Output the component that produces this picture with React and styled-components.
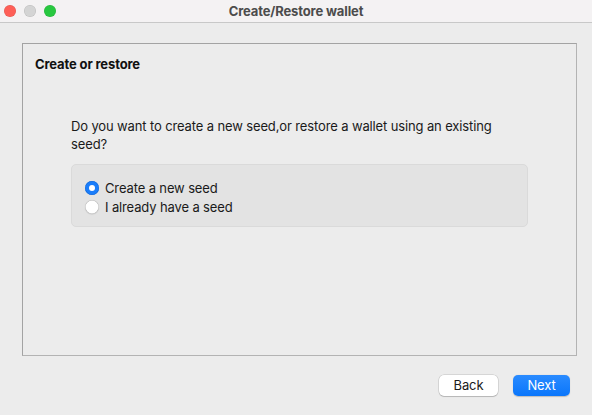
import React, { useState } from 'react';
import styled, { createGlobalStyle } from 'styled-components';

const GlobalStyle = createGlobalStyle`
  html, body {
    margin: 0;
    padding: 0;
    background: #ececec;
  }
  body {
    font-family: Inter, "Liberation Sans", sans-serif;
    letter-spacing: -0.13px;
    -webkit-font-smoothing: antialiased;
  }
  * {
    box-sizing: border-box;
  }
`;

const Window = styled.div`
  width: 592px;
  height: 415px;
  display: flex;
  flex-direction: column;
  background: #ececec;
  overflow: hidden;
`;

const TitleBar = styled.div`
  height: 23px;
  flex-shrink: 0;
  display: grid;
  grid-template-columns: 80px 1fr 80px;
  align-items: center;
  background: #f4f2f3;
  border-bottom: 1px solid #c8c8c8;
`;

const Lights = styled.div`
  display: flex;
  gap: 8px;
  padding-left: 4px;
`;

const Light = styled.span`
  width: 12px;
  height: 12px;
  border-radius: 50%;
  background: ${p => p.$color};
  box-shadow: inset 0 0 0 0.5px rgba(0, 0, 0, 0.12);
`;

const Title = styled.div`
  text-align: center;
  font-size: 13px;
  font-weight: 700;
  color: #4c4c4c;
`;

const Body = styled.div`
  flex: 1;
  display: flex;
  flex-direction: column;
  padding: 20px 15px 0 22px;
`;

const Panel = styled.div`
  height: 313px;
  border: 1px solid #a3a3a3;
  border-bottom-color: #b3b3b3;
  border-right-color: #b3b3b3;
  padding: 12px 0 0 12px;
  display: flex;
  flex-direction: column;
`;

const PanelTitle = styled.div`
  font-size: 13px;
  font-weight: 700;
  color: #111;
  line-height: 16px;
`;

const Content = styled.div`
  margin: 45px 48px 0 36px;
  display: flex;
  flex-direction: column;
`;

const Question = styled.div`
  font-size: 13px;
  line-height: 18px;
  color: #1a1a1a;
  padding-right: 20px;
`;

const Group = styled.div`
  margin-top: 11px;
  height: 63px;
  background: #e3e3e3;
  border: 1px solid #dadada;
  border-radius: 5px;
  padding: 13px 0 0 13px;
  display: flex;
  flex-direction: column;
`;

const Option = styled.label`
  display: flex;
  align-items: center;
  gap: 6px;
  height: 19px;
  font-size: 13px;
  color: #1a1a1a;
  cursor: default;
`;

const Radio = styled.span`
  width: 14px;
  height: 14px;
  border-radius: 50%;
  display: flex;
  align-items: center;
  justify-content: center;
  background: ${p => (p.$checked ? '#1a7dfa' : '#ffffff')};
  box-shadow: ${p =>
    p.$checked ? 'inset 0 0 0 0.5px #1469d8' : 'inset 0 0 0 0.5px #b5b5b5, 0 0.5px 1px rgba(0,0,0,0.15)'};
  &::after {
    content: '';
    width: 6px;
    height: 6px;
    border-radius: 50%;
    background: #fff;
    display: ${p => (p.$checked ? 'block' : 'none')};
  }
`;

const Footer = styled.div`
  display: flex;
  justify-content: flex-end;
  gap: 15px;
  padding: 19px 7px 0 0;
`;

const Button = styled.button`
  height: 21px;
  width: ${p => (p.$primary ? '57px' : '59px')};
  padding: 0;
  border-radius: 5px;
  font-family: inherit;
  letter-spacing: inherit;
  font-size: 13px;
  line-height: 19px;
  border: none;
  color: ${p => (p.$primary ? '#ffffff' : '#1a1a1a')};
  background: ${p => (p.$primary ? 'linear-gradient(#2a8bff, #0a76fb)' : '#ffffff')};
  box-shadow: ${p =>
    p.$primary
      ? '0 0.5px 1px rgba(0,0,0,0.2)'
      : '0 0 0 0.5px rgba(0,0,0,0.18), 0 1px 1px rgba(0,0,0,0.15)'};
`;

const options = ['Create a new seed', 'I already have a seed'];

export default function App() {
  const [choice, setChoice] = useState(0);
  return (
    <Window>
      <GlobalStyle />
      <TitleBar>
        <Lights>
          <Light $color="#fe5f57" />
          <Light $color="#d4d4d4" />
          <Light $color="#28c840" />
        </Lights>
        <Title>Create/Restore wallet</Title>
        <div />
      </TitleBar>
      <Body>
        <Panel>
          <PanelTitle>Create or restore</PanelTitle>
          <Content>
            <Question>
              Do you want to create a new seed,or restore a wallet using an existing seed?
            </Question>
            <Group>
              {options.map((o, i) => (
                <Option key={o} onClick={() => setChoice(i)}>
                  <Radio $checked={choice === i} />
                  {o}
                </Option>
              ))}
            </Group>
          </Content>
        </Panel>
        <Footer>
          <Button>Back</Button>
          <Button $primary>Next</Button>
        </Footer>
      </Body>
    </Window>
  );
}
